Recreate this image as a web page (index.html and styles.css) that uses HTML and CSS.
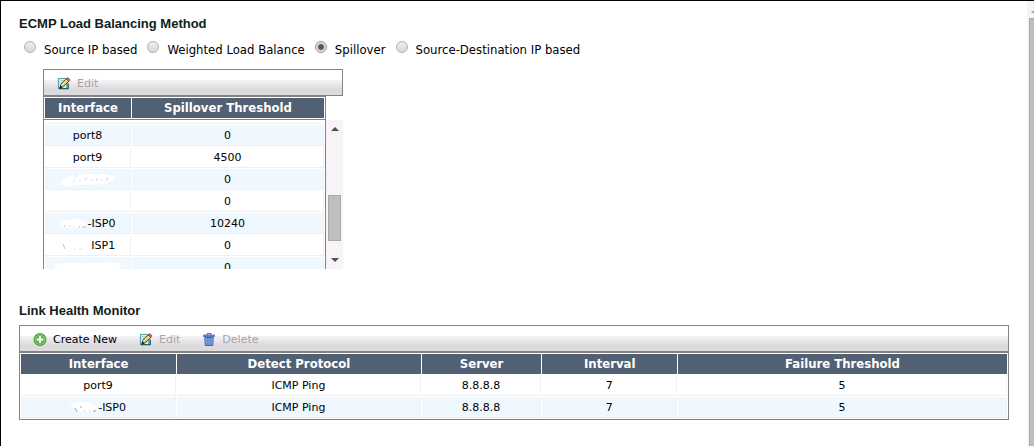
FILE: index.html
```html
<!DOCTYPE html>
<html lang="en">
<head>
    <meta charset="UTF-8">
    <meta name="viewport" content="width=device-width, initial-scale=1.0">
    <title>ECMP Load Balancing Method</title>
    <link rel="stylesheet" href="styles.css">
</head>
<body>
<!-- Shared icons -->
<svg class="icon-defs" aria-hidden="true">
    <symbol id="icon-edit" viewBox="0 0 14 14">
        <path d="M1 1.500h9v11H1z" fill="#d8f0f4" stroke="#3a98a4"/>
        <path d="M1.500 12.500h10V7" fill="none" stroke="#14626e" stroke-width="1.500"/>
        <path d="M3 4h4M3 6h2" stroke="#8cc8d2"/>
        <path d="M2.500 12l1-4L9.500 1.800l3 2.700L6 10.600z" fill="#e8cf62" stroke="#3b3412" stroke-width=".9"/>
        <path d="M2.300 12.200l.9-3 2.200 1.900z" fill="#111"/>
        <path d="M9.200 2L11 .6l2.500 2.300-1.400 1.800z" fill="#c9604a" stroke="#7d3324" stroke-width=".6"/>
        <path d="M4.500 8.800l5.300-5.200" stroke="#fff4ae"/>
    </symbol>
    <symbol id="icon-add" viewBox="0 0 12 12">
        <circle cx="6" cy="6" r="5.500" fill="#5cb548" stroke="#4a9c3c"/>
        <circle cx="6" cy="6" r="4.500" fill="none" stroke="#9ad68a" stroke-width=".7"/>
        <path d="M6 3v6M3 6h6" stroke="#fff" stroke-width="2"/>
    </symbol>
    <symbol id="icon-trash" viewBox="0 0 12 13">
        <path d="M4 2V.7h4V2" fill="none" stroke="#3c62a8"/>
        <path d="M.5 2h11v1.500H.5z" fill="#7aa3de" stroke="#3c62a8" stroke-width=".8"/>
        <path d="M1.800 4.500h8.400l-.5 8H2.300z" fill="#8fb6ea" stroke="#3c62a8"/>
        <path d="M4.200 5v7M6 5v7M7.800 5v7" stroke="#4a70b4" stroke-width=".9"/>
    </symbol>
</svg>

<div class="page">
    <main class="content">
        <section class="ecmp">
            <h2>ECMP Load Balancing Method</h2>
            <form class="methods">
                <label><input type="radio" name="method">Source IP based</label>
                <label><input type="radio" name="method">Weighted Load Balance</label>
                <label><input type="radio" name="method" checked>Spillover</label>
                <label><input type="radio" name="method">Source-Destination IP based</label>
            </form>

            <div class="spillover">
                <div class="toolbar">
                    <button type="button" disabled><svg class="icon"><use href="#icon-edit"/></svg>Edit</button>
                </div>
                <table class="grid spill-head">
                    <thead>
                        <tr><th class="col-name">Interface</th><th>Spillover Threshold</th></tr>
                    </thead>
                </table>
                <div class="scroll-area">
                    <div class="rows">
                        <table class="grid spill-body">
                            <tbody>
                                <tr class="cut"><td class="col-name"></td><td></td></tr>
                                <tr class="alt"><td>port8</td><td>0</td></tr>
                                <tr><td>port9</td><td>4500</td></tr>
                                <tr class="alt">
                                    <td>
                                        <svg class="mask-wide" viewBox="0 0 56 12">
                                            <path d="M1 7q4-4 14-6 14-2 28-1 12 2 12 5-4 3-12 5-12 1-26 1-10 2-15 0-2-2-1-4z" fill="#fff"/>
                                            <path d="M16 1v2M14 6v2M20 6v1M24 5h3M31 6h2M37 4v3M41 6h2M47 3v4" stroke="#dccfe4"/>
                                        </svg>
                                    </td>
                                    <td>0</td>
                                </tr>
                                <tr><td></td><td>0</td></tr>
                                <tr class="alt">
                                    <td>
                                        <svg class="mask" viewBox="0 0 28 12">
                                            <path d="M0 5q5-4 14-4 12 1 12 4 1 4-6 5-10 1-18-1-3-2-2-4z" fill="#fff"/>
                                            <path d="M5 7v2M10 8v1M14 8v1M18 9h2M22 9h4" stroke="#cbbccb"/>
                                        </svg>-ISP0
                                    </td>
                                    <td>10240</td>
                                </tr>
                                <tr>
                                    <td>
                                        <svg class="mask" viewBox="0 0 28 12">
                                            <path d="M3 4l2 5" stroke="#dcc08c"/>
                                            <path d="M11 9h1M14 9h1M19 9h4" stroke="#e0e0e0"/>
                                        </svg>&nbsp;ISP1
                                    </td>
                                    <td>0</td>
                                </tr>
                                <tr class="alt">
                                    <td>
                                        <svg class="mask-long" viewBox="0 0 68 12">
                                            <path d="M1 4q6-4 16-3 24 1 34-1 16 0 16 3-1 5-10 9H6Q-1 8 1 4z" fill="#fff"/>
                                        </svg>
                                    </td>
                                    <td>0</td>
                                </tr>
                            </tbody>
                        </table>
                    </div>
                    <div class="scrollbar" aria-hidden="true">
                        <svg class="arrow" viewBox="0 0 8 4"><path d="M0 4l4-4 4 4z"/></svg>
                        <div class="thumb"></div>
                        <svg class="arrow" viewBox="0 0 8 4"><path d="M0 0l4 4 4-4z"/></svg>
                    </div>
                </div>
            </div>
        </section>

        <section class="monitor">
            <h2>Link Health Monitor</h2>
            <div class="toolbar">
                <button type="button"><svg class="icon"><use href="#icon-add"/></svg>Create New</button>
                <button type="button" disabled><svg class="icon"><use href="#icon-edit"/></svg>Edit</button>
                <button type="button" disabled><svg class="icon"><use href="#icon-trash"/></svg>Delete</button>
            </div>
            <table class="grid monitor-grid">
                <thead>
                    <tr>
                        <th class="col-interface">Interface</th>
                        <th class="col-protocol">Detect Protocol</th>
                        <th class="col-server">Server</th>
                        <th class="col-interval">Interval</th>
                        <th>Failure Threshold</th>
                    </tr>
                </thead>
                <tbody>
                    <tr><td>port9</td><td>ICMP Ping</td><td>8.8.8.8</td><td>7</td><td>5</td></tr>
                    <tr class="alt">
                        <td>
                            <svg class="mask" viewBox="0 0 28 12">
                                <path d="M0 2q5-2 14-2 10 1 11 4 2 5-6 6-8 1-10-1-3-4-8-5-2-1-1-2z" fill="#fff"/>
                                <path d="M5 6l2 4M11 4v2M14 9h1M19 9h1M23 9h3" stroke="#a8a8b0"/>
                            </svg>-ISP0
                        </td>
                        <td>ICMP Ping</td><td>8.8.8.8</td><td>7</td><td>5</td>
                    </tr>
                </tbody>
            </table>
        </section>
    </main>

    <div class="page-scroll" aria-hidden="true">
        <svg class="page-arrow" viewBox="0 0 8 4"><path d="M0 4l4-4 4 4z"/></svg>
        <div class="page-thumb"></div>
    </div>
</div>
</body>
</html>
```
FILE: styles.css
```css
* {
    box-sizing: border-box;
}

body {
    margin: 0;
    background: #fff;
    color: #000;
    font-family: "DejaVu Sans", Verdana, sans-serif;
    font-size: 11px;
}

.icon-defs {
    display: none;
}

.page {
    display: flex;
    min-height: 100vh;
    border-top: 1px solid #000;
    border-left: 1px solid #000;
    overflow: hidden;
}

.content {
    flex: 1;
    min-width: 0;
    padding: 15px 18px 16px;
}

h2 {
    margin: 0;
    font-family: "Liberation Sans", Arial, sans-serif;
    font-size: 13px;
    line-height: 16px;
    color: #10201c;
}

/* Load balancing method */
.methods {
    display: flex;
    gap: 10px;
    margin: 9px 0 0 5px;
}

.methods label {
    display: flex;
    gap: 8px;
    font-family: "DejaVu Sans Condensed", "DejaVu Sans", Tahoma, sans-serif;
    font-size: 13px;
    line-height: 18px;
    white-space: nowrap;
}

.methods input {
    appearance: none;
    flex: none;
    width: 12px;
    height: 12px;
    margin: 0;
    border: 1px solid #b0b0b0;
    border-radius: 50%;
    background: linear-gradient(#eee, #d8d8d8);
}

.methods input:checked {
    border-color: #999;
    background: radial-gradient(circle, #555 0 2px, #e2e2e2 4px);
}

.spillover {
    width: 300px;
    margin: 10px 0 0 24px;
}

/* Toolbar */
.toolbar {
    display: flex;
    align-items: center;
    gap: 22px;
    height: 27px;
    padding: 2px 0 0 13px;
    border: 1px solid #848284;
    background: linear-gradient(#fff 38%, #f4f2f5 42%, #dedbde 75%);
}

.toolbar button {
    display: flex;
    align-items: center;
    gap: 6px;
    padding: 0;
    border: 0;
    background: none;
    color: #000;
    font: inherit;
    line-height: 14px;
}

.toolbar button:disabled {
    color: #a5a5a5;
}

.icon {
    width: 14px;
    height: 13px;
}

/* Tables */
.grid {
    width: 100%;
    border: 1px solid #848284;
    border-collapse: separate;
    border-spacing: 1px;
    table-layout: fixed;
}

.grid th {
    height: 20px;
    padding: 0;
    background: #526073;
    color: #fff;
    font-family: "DejaVu Sans Condensed", "DejaVu Sans", Verdana, sans-serif;
    font-size: 13px;
    line-height: 20px;
}

.grid td {
    height: 21px;
    padding: 1px 0 0;
    border-right: 1px solid #f4f2f4;
    border-bottom: 1px solid #efefef;
    line-height: 19px;
    text-align: center;
    white-space: nowrap;
}

.grid .alt td {
    background: #eff7ff;
}

.grid .cut td {
    height: 3px;
}

.grid.spill-head {
    width: 283px;
}

.spill-body {
    border-top: 0;
    border-bottom: 0;
}

.col-name {
    width: 86px;
}

.col-interface {
    width: 15.8%;
}

.col-protocol {
    width: 24.8%;
}

.col-server {
    width: 12.2%;
}

.col-interval {
    width: 13.7%;
}

/* Blanked-out interface names */
.mask,
.mask-wide,
.mask-long {
    height: 12px;
    vertical-align: middle;
}

.mask {
    width: 28px;
}

.mask-wide {
    width: 56px;
}

.mask-long {
    width: 68px;
}

.scroll-area {
    display: flex;
    height: 149px;
}

.rows {
    width: 283px;
    overflow: hidden;
}

.scrollbar {
    display: flex;
    flex: 1;
    flex-direction: column;
    align-items: center;
    padding: 7px 0;
    background: #f7f3f7;
}

.arrow {
    width: 8px;
    height: 4px;
    fill: #505050;
}

.thumb {
    width: 13px;
    height: 46px;
    margin: auto 0 17px;
    border: 1px solid #a8a8a8;
    background: #bdbebd;
}

.monitor {
    margin-top: 34px;
}

.monitor .toolbar {
    margin-top: 6px;
}

.page-scroll {
    display: flex;
    flex-direction: column;
    width: 7px;
    padding: 8px 0 0 2px;
    background: #f7f3f7;
    overflow: hidden;
}

.page-arrow {
    flex: none;
    width: 8px;
    height: 4px;
    margin-left: 2px;
    fill: #a0a0a0;
}

.page-thumb {
    flex: 1;
    margin-top: 5px;
    border: 1px solid #a8a8a8;
    border-width: 1px 0 0 1px;
    background: #bdbebd;
}
```
